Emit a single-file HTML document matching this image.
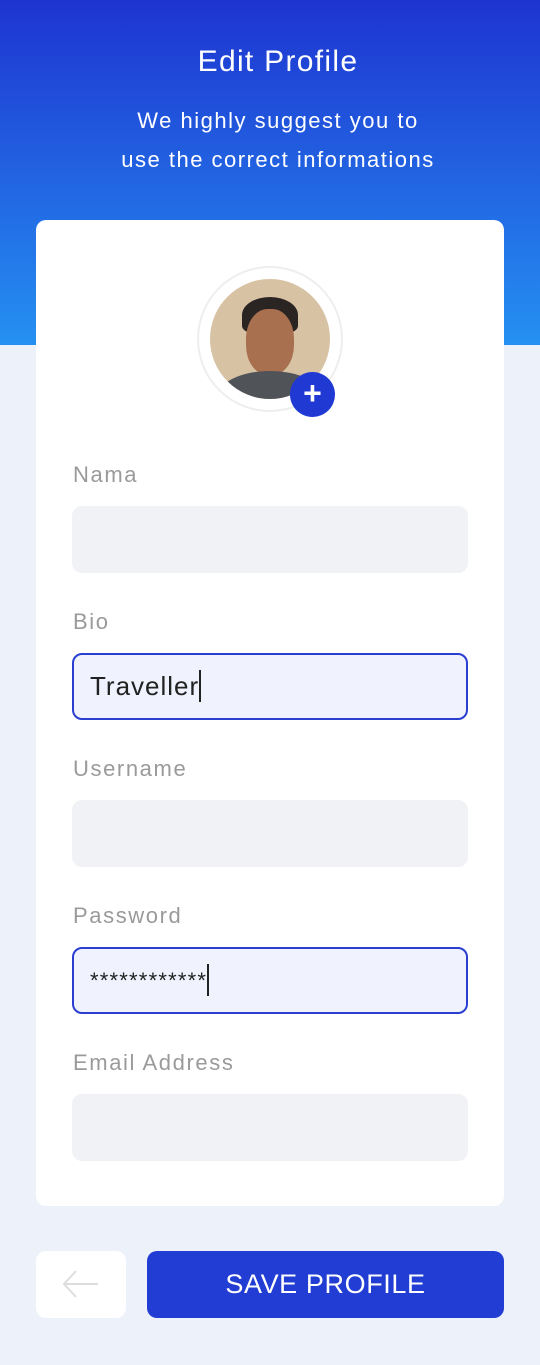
<!DOCTYPE html>
<html><head><style>
*{margin:0;padding:0;box-sizing:border-box}
body{width:540px;height:1365px;background:#edf1f9;font-family:"Liberation Sans",sans-serif;position:relative;overflow:hidden}
.hdr{position:absolute;left:0;top:0;width:540px;height:345px;background:linear-gradient(180deg,#1e34d0 0%,#2590f2 100%)}
.t{position:absolute;left:0;width:540px;text-align:center;color:#fff;padding-left:16px}
.card{position:absolute;left:36px;top:220px;width:468px;height:986px;background:#fff;border-radius:10px}
.lbl{position:absolute;left:73px;font-size:22px;color:#9a9a9a;letter-spacing:1.6px}
.in{position:absolute;left:72px;width:396px;height:67px;background:#f1f2f5;border-radius:10px}
.act{background:#f0f3fe;border:2px solid #2a3fd0;font-size:26px;color:#222;padding-left:16px;line-height:63px}
.cur{display:inline-block;width:2px;height:32px;background:#222;vertical-align:middle;margin-top:-4px}
</style></head><body>
<div class="hdr"></div>
<div class="t" style="top:45px;font-size:30px;letter-spacing:1.3px">Edit Profile</div>
<div class="t" style="top:101px;font-size:22px;line-height:39px;letter-spacing:1.5px">We highly suggest you to<br>use the correct informations</div>
<div class="card"></div>
<div style="position:absolute;left:197px;top:266px;width:146px;height:146px;border-radius:50%;border:2px solid #eee;background:#fff"></div>
<div style="position:absolute;left:210px;top:279px;width:120px;height:120px;border-radius:50%;overflow:hidden;background:#d8c2a4">
<div style="position:absolute;left:32px;top:18px;width:56px;height:36px;border-radius:50% 50% 20% 20%;background:#2a2522"></div>
<div style="position:absolute;left:36px;top:30px;width:48px;height:66px;border-radius:45%;background:#a8704f"></div>
<div style="position:absolute;left:8px;top:92px;width:104px;height:50px;border-radius:50% 50% 0 0;background:#505459"></div>
</div>
<div style="position:absolute;left:290px;top:372px;width:45px;height:45px;border-radius:50%;background:#2039d3;color:#fff;font-size:32px;line-height:43px;text-align:center;font-weight:bold">+</div>
<div class="lbl" style="top:462px">Nama</div>
<div class="in" style="top:506px"></div>
<div class="lbl" style="top:609px">Bio</div>
<div class="in act" style="top:653px;letter-spacing:1px">Traveller<span class="cur"></span></div>
<div class="lbl" style="top:756px">Username</div>
<div class="in" style="top:800px"></div>
<div class="lbl" style="top:903px">Password</div>
<div class="in act" style="top:947px;font-size:22px;letter-spacing:1.2px">************<span class="cur"></span></div>
<div class="lbl" style="top:1050px">Email Address</div>
<div class="in" style="top:1094px"></div>
<div style="position:absolute;left:36px;top:1251px;width:90px;height:67px;background:#fff;border-radius:10px">
<svg width="90" height="67"><path d="M62 33H28M40 20L28 33L40 46" stroke="#ddd" stroke-width="2" fill="none"/></svg></div>
<div style="position:absolute;left:147px;top:1251px;width:357px;height:67px;background:#213dd3;border-radius:10px;color:#fff;font-size:27px;text-align:center;line-height:67px;letter-spacing:.6px">SAVE PROFILE</div>
</body></html>
